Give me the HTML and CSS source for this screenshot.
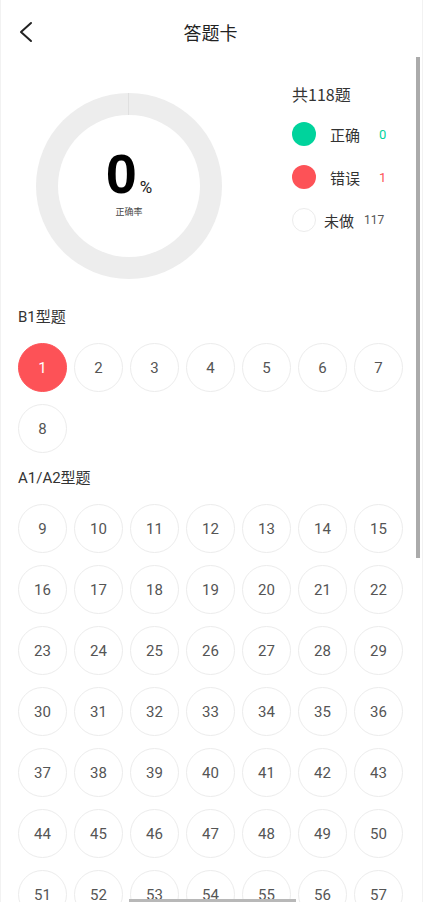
FILE: index.html
```html
<!DOCTYPE html>
<html lang="zh-CN">

<head>
    <meta charset="UTF-8">
    <meta name="viewport" content="width=device-width, initial-scale=1.0">
    <title>答题卡</title>
    <link rel="stylesheet" href="styles.css">
</head>

<body>
    <div class="page">
        <header class="top-bar">
            <a href="#" class="back-button">
                <svg width="16" height="22" viewBox="0 0 16 22">
                    <path d="M13 2 L3 11 L13 20" fill="none" stroke="#222" stroke-width="2" stroke-linecap="round" stroke-linejoin="round" />
                </svg>
            </a>
            <h1>答题卡</h1>
        </header>

        <section class="summary">
            <div class="donut">
                <span class="donut-tick"></span>
                <div class="donut-hole">
                    <div class="rate"><span class="rate-num">0</span><span class="rate-unit">%</span></div>
                    <div class="rate-label">正确率</div>
                </div>
            </div>

            <div class="legend">
                <div class="legend-total">共118题</div>
                <div class="legend-row">
                    <span class="dot dot-right"></span>
                    <span class="legend-text">正确</span>
                    <span class="legend-count count-right">0</span>
                </div>
                <div class="legend-row">
                    <span class="dot dot-wrong"></span>
                    <span class="legend-text">错误</span>
                    <span class="legend-count count-wrong">1</span>
                </div>
                <div class="legend-row row-todo">
                    <span class="dot dot-todo"></span>
                    <span class="legend-text">未做</span>
                    <span class="legend-count count-todo">117</span>
                </div>
            </div>
        </section>

        <h2 class="group-title">B1型题</h2>
        <div class="grid">
            <button class="q wrong">1</button>
            <button class="q">2</button>
            <button class="q">3</button>
            <button class="q">4</button>
            <button class="q">5</button>
            <button class="q">6</button>
            <button class="q">7</button>
            <button class="q">8</button>
        </div>

        <h2 class="group-title">A1/A2型题</h2>
        <div class="grid">
            <button class="q">9</button>
            <button class="q">10</button>
            <button class="q">11</button>
            <button class="q">12</button>
            <button class="q">13</button>
            <button class="q">14</button>
            <button class="q">15</button>
            <button class="q">16</button>
            <button class="q">17</button>
            <button class="q">18</button>
            <button class="q">19</button>
            <button class="q">20</button>
            <button class="q">21</button>
            <button class="q">22</button>
            <button class="q">23</button>
            <button class="q">24</button>
            <button class="q">25</button>
            <button class="q">26</button>
            <button class="q">27</button>
            <button class="q">28</button>
            <button class="q">29</button>
            <button class="q">30</button>
            <button class="q">31</button>
            <button class="q">32</button>
            <button class="q">33</button>
            <button class="q">34</button>
            <button class="q">35</button>
            <button class="q">36</button>
            <button class="q">37</button>
            <button class="q">38</button>
            <button class="q">39</button>
            <button class="q">40</button>
            <button class="q">41</button>
            <button class="q">42</button>
            <button class="q">43</button>
            <button class="q">44</button>
            <button class="q">45</button>
            <button class="q">46</button>
            <button class="q">47</button>
            <button class="q">48</button>
            <button class="q">49</button>
            <button class="q">50</button>
            <button class="q">51</button>
            <button class="q">52</button>
            <button class="q">53</button>
            <button class="q">54</button>
            <button class="q">55</button>
            <button class="q">56</button>
            <button class="q">57</button>
        </div>
    </div>

    <div class="scroll-thumb"></div>
    <div class="home-bar"></div>
</body>

</html>
```

FILE: styles.css
```css
html,
body {
    margin: 0;
    height: 100%;
    overflow: hidden;
}

body {
    font-family: Roboto, "Noto Sans CJK SC", sans-serif;
    background-color: #fff;
    color: #333;
    position: relative;
    border-left: 1px solid #f2f2f2;
    border-right: 1px solid #f2f2f2;
    box-sizing: border-box;
}

.page {
    padding: 0 19px 0 17px;
}

.top-bar {
    height: 64px;
    display: flex;
    align-items: center;
    justify-content: center;
    position: relative;
}

.back-button {
    position: absolute;
    left: 0;
    top: 21px;
    display: flex;
}

h1 {
    margin: 0;
    font-size: 18px;
    font-weight: 400;
    color: #222;
    font-family: "Noto Sans CJK SC", sans-serif;
}

.summary {
    display: flex;
    align-items: flex-start;
    padding-top: 29px;
    height: 213px;
}

.donut {
    width: 186px;
    height: 186px;
    margin-left: 18px;
    border-radius: 50%;
    background-color: #ededed;
    display: flex;
    align-items: center;
    justify-content: center;
    position: relative;
    flex-shrink: 0;
}

.donut-tick {
    position: absolute;
    top: 0;
    left: 92px;
    width: 1px;
    height: 22px;
    background-color: #e0e0e0;
}

.donut-hole {
    width: 142px;
    height: 142px;
    border-radius: 50%;
    background-color: #fff;
    display: flex;
    flex-direction: column;
    align-items: center;
    justify-content: center;
}

.rate {
    display: flex;
    align-items: baseline;
    margin-left: 0;
    margin-top: -6px;
}

.rate-num {
    font-family: "Liberation Sans", sans-serif;
    font-size: 56px;
    font-weight: 700;
    line-height: 50px;
    color: #000;
}

.rate-unit {
    font-size: 17px;
    color: #222;
    margin-left: 3px;
}

.rate-label {
    font-family: "Noto Sans CJK SC", sans-serif;
    font-size: 9px;
    color: #444;
    margin-top: 6px;
}

.legend {
    margin-left: 70px;
    margin-top: -11px;
}

.legend-total {
    font-family: "Noto Sans CJK SC", sans-serif;
    font-size: 16px;
    color: #333;
    line-height: 24px;
    margin-bottom: 15px;
}

.legend-row {
    display: flex;
    align-items: center;
    height: 26px;
    margin-bottom: 17px;
}

.dot {
    width: 24px;
    height: 24px;
    border-radius: 50%;
    flex-shrink: 0;
}

.dot-right {
    background-color: #00d39c;
}

.dot-wrong {
    background-color: #fd5257;
}

.dot-todo {
    background-color: #fff;
    border: 1px solid #ececec;
    box-sizing: border-box;
}

.legend-text {
    font-family: "Noto Sans CJK SC", sans-serif;
    font-size: 15px;
    color: #333;
    margin-left: 14px;
}

.row-todo .legend-text {
    margin-left: 8px;
}

.legend-count {
    font-size: 13px;
    margin-left: 19px;
}

.count-right {
    color: #00d39c;
}

.count-wrong {
    color: #fd5257;
}

.count-todo {
    color: #555;
    font-size: 12px;
    margin-left: 10px;
}

.group-title {
    font-family: Roboto, "Noto Sans CJK SC", sans-serif;
    font-size: 15px;
    font-weight: 400;
    color: #333;
    margin: 0;
    line-height: 22px;
    height: 22px;
}

.grid {
    display: grid;
    grid-template-columns: repeat(7, 49px);
    column-gap: 7px;
    row-gap: 12px;
    margin-top: 15px;
    margin-bottom: 14px;
}

.q {
    width: 49px;
    height: 49px;
    border-radius: 50%;
    border: 1px solid #ececec;
    background-color: #fff;
    color: #555;
    font-family: Roboto, sans-serif;
    font-size: 15px;
    padding: 0;
    display: flex;
    align-items: center;
    justify-content: center;
}

.q.wrong {
    background-color: #fd5257;
    border-color: #fd5257;
    color: #fff;
}

.scroll-thumb {
    position: absolute;
    top: 57px;
    right: 2px;
    width: 4px;
    height: 501px;
    background-color: #ababab;
}

.home-bar {
    position: absolute;
    bottom: 0;
    left: 128px;
    width: 167px;
    height: 3px;
    background-color: #b8b8b8;
}
```
